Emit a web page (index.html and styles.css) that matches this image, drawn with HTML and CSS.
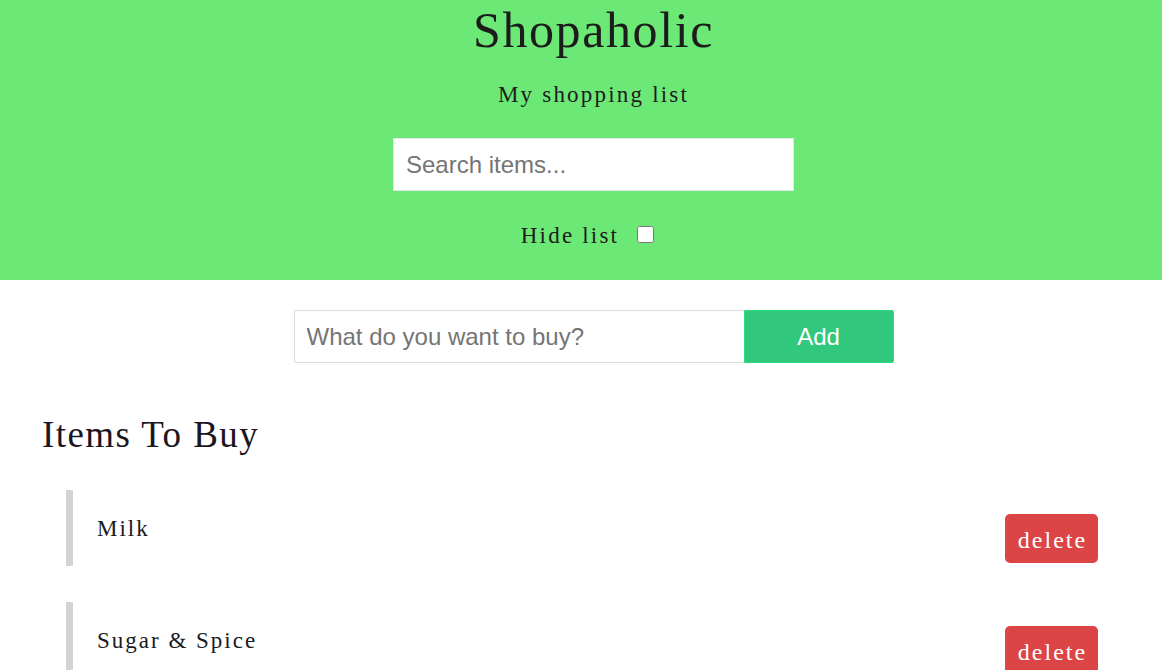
FILE: index.html
```html
<!DOCTYPE html>
<html>
<head>
<meta charset="utf-8">
<title>Shopaholic</title>
<link rel="stylesheet" href="styles.css">
</head>
<body>
<header class="hero">
  <h1 class="title">Shopaholic</h1>
  <p class="subtitle">My shopping list</p>
  <input class="search" type="text" placeholder="Search items...">
  <label class="hide">
    <span class="hide-text">Hide list</span>
    <input class="hide-box" type="checkbox">
  </label>
</header>
<main class="content">
  <form class="add-form">
    <input class="add-input" type="text" placeholder="What do you want to buy?">
    <button class="add-btn" type="button">Add</button>
  </form>
  <section class="list-section">
    <h2 class="list-title">Items To Buy</h2>
    <ul class="items">
      <li class="item">
        <span class="item-name">Milk</span>
        <button class="delete" type="button">delete</button>
      </li>
      <li class="item">
        <span class="item-name">Sugar &amp; Spice</span>
        <button class="delete" type="button">delete</button>
      </li>
    </ul>
  </section>
</main>
</body>
</html>
```

FILE: styles.css
```css
* { box-sizing: border-box; }

html, body {
  margin: 0;
  padding: 0;
  background: #ffffff;
}

body {
  font-family: "Liberation Serif", "Times New Roman", serif;
  color: #1c1c1c;
  overflow: hidden;
}

.hero {
  background: #6ce876;
  height: 280px;
  display: flex;
  flex-direction: column;
  align-items: center;
  padding-left: 25px;
}

.title {
  margin: 0;
  font-size: 50px;
  line-height: 60px;
  font-weight: normal;
  letter-spacing: 1.6px;
}

.subtitle {
  margin: 20px 0 0;
  font-size: 23px;
  line-height: 30px;
  letter-spacing: 2.2px;
}

.search {
  margin-top: 28px;
  width: 401px;
  height: 53px;
  border: 1px solid #e6e6e6;
  background: #fff;
  padding: 0 12px;
  font-family: "Liberation Sans", Arial, sans-serif;
  font-size: 24px;
  color: #333;
  outline: none;
}

.search::placeholder,
.add-input::placeholder {
  color: #757575;
}

.hide {
  margin: 30px 12px 0 0;
  display: flex;
  align-items: center;
  gap: 18px;
}

.hide-text {
  font-size: 23px;
  line-height: 30px;
  letter-spacing: 2.2px;
}

.hide-box {
  margin: 0;
  width: 17px;
  height: 17px;
  position: relative;
  top: -2px;
}

.content {
  display: flex;
  flex-direction: column;
}

.add-form {
  margin: 30px 0 0;
  padding-left: 25px;
  display: flex;
  justify-content: center;
}

.add-input {
  width: 450px;
  height: 53px;
  border: 1px solid #dcdcdc;
  border-right: none;
  border-radius: 2px 0 0 2px;
  padding: 0 12px;
  font-family: "Liberation Sans", Arial, sans-serif;
  font-size: 24px;
  color: #333;
  outline: none;
}

.add-btn {
  width: 150px;
  height: 53px;
  border: 1px solid #2ddc7c;
  border-radius: 0 2px 2px 0;
  background: #31c77c;
  color: #ffffff;
  font-family: "Liberation Sans", Arial, sans-serif;
  font-size: 24px;
  padding: 0;
}

.list-section {
  padding: 0 64px 0 42px;
}

.list-title {
  margin: 50px 0 0;
  font-size: 37px;
  line-height: 44px;
  font-weight: normal;
  letter-spacing: 1.4px;
  color: #1a1622;
}

.items {
  list-style: none;
  margin: 33px 0 0 24px;
  padding: 0;
  display: flex;
  flex-direction: column;
  gap: 36px;
}

.item {
  display: flex;
  align-items: flex-start;
  justify-content: space-between;
  border-left: 7px solid #d3d3d3;
  padding: 24px 0 3px 24px;
}

.item-name {
  font-size: 23px;
  line-height: 30px;
  letter-spacing: 2px;
  color: #1a1a22;
}

.delete {
  height: 49px;
  width: 93px;
  border: none;
  border-radius: 5px;
  background: #dc4546;
  color: #ffffff;
  font-family: "Liberation Serif", "Times New Roman", serif;
  font-size: 24px;
  line-height: 46px;
  letter-spacing: 2px;
  padding: 3px 0 0 2px;
}
```
